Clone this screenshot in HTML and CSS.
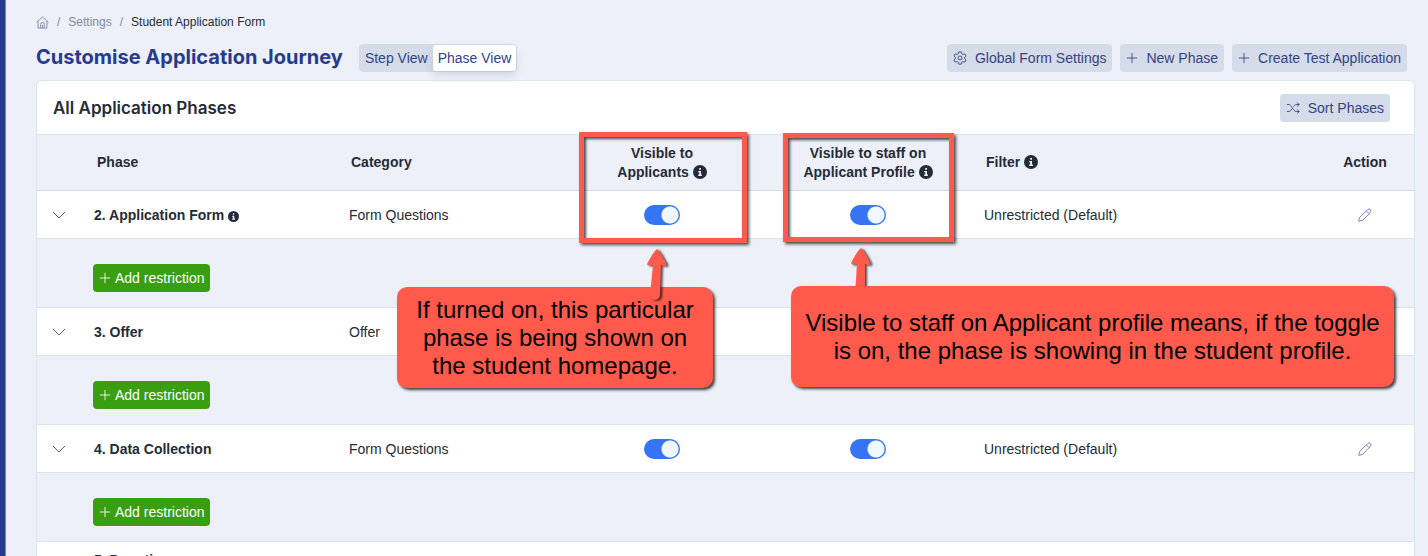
FILE: index.html
```html
<!DOCTYPE html>
<html lang="en">
<head>
<meta charset="UTF-8">
<meta name="viewport" content="width=device-width, initial-scale=1.0">
<title>Customise Application Journey</title>
<link rel="stylesheet" href="styles.css">
</head>
<body>
    <!-- Shared icons -->
    <svg class="sprite" aria-hidden="true">
        <symbol id="plus" viewBox="0 0 14 14"><path d="M7 1v12M1 7h12"/></symbol>
        <symbol id="chevron" viewBox="0 0 14 14"><path d="M1 4l6 6 6-6"/></symbol>
        <symbol id="pencil" viewBox="0 0 14 14"><path d="M.7 13.300l.9-3.800L9.500 1.600a2 2 0 0 1 2.900 2.900L4.500 12.400zM8.300 2.800l2.900 2.900"/></symbol>
        <symbol id="info" viewBox="0 0 14 14">
            <circle cx="7" cy="7" r="7" fill="#252b38" stroke="none"/>
            <path d="M6.200 3h1.800v1.800H6.200zM5.200 6h2.800v3.600h.9V11H5.200V9.600h1V7.200h-1z" fill="#edf0f8" stroke="none"/>
        </symbol>
    </svg>

    <div class="page">
        <div class="sidebar"></div>
        <main class="main">
            <nav class="breadcrumb" aria-label="Breadcrumb">
                <a href="#" aria-label="Home">
                    <svg class="icon-home" viewBox="0 0 14 14"><path d="M.7 6.800L7 1l6.300 5.800M2.200 5.600V13h9.600V5.600M5 13V9a2 2 0 0 1 4 0v4M7 9.500V13"/></svg>
                </a>
                <span class="slash">/</span>
                <a href="#">Settings</a>
                <span class="slash">/</span>
                <span class="current">Student Application Form</span>
            </nav>

            <div class="toolbar">
                <h1>Customise Application Journey</h1>
                <div class="view-switch">
                    <button type="button">Step View</button>
                    <button type="button" class="active">Phase View</button>
                </div>
                <div class="actions">
                    <button type="button" class="btn">
                        <svg class="icon-btn" viewBox="0 0 16 16"><path d="M6.600 1h2.800l.5 2.100 1.500.9 2.100-.7 1.400 2.400L13.300 7.200v1.600l1.600 1.500-1.400 2.400-2.100-.7-1.500.9L9.400 15H6.600l-.5-2.100-1.500-.9-2.100.7-1.400-2.400 1.600-1.500V7.200L1.100 5.700l1.400-2.400 2.100.7 1.500-.9z"/><circle cx="8" cy="8" r="2.300"/></svg>
                        Global Form Settings
                    </button>
                    <button type="button" class="btn"><svg class="icon-plus"><use href="#plus"/></svg>New Phase</button>
                    <button type="button" class="btn"><svg class="icon-plus"><use href="#plus"/></svg>Create Test Application</button>
                </div>
            </div>

            <section class="card">
                <div class="card-header">
                    <h2>All Application Phases</h2>
                    <button type="button" class="btn">
                        <svg class="icon-btn" viewBox="0 0 16 16"><path d="M1 4h2.500c2.500 0 5 8 8 8H15M1 12h2.500c1.200 0 2.200-1.300 3.200-3M8.500 6.500C9.500 5 10.500 4 11.500 4H15M12.800 1.800L15 4l-2.200 2.200M12.800 9.800L15 12l-2.200 2.200"/></svg>
                        Sort Phases
                    </button>
                </div>

                <table class="phases">
                    <colgroup>
                        <col class="col-toggle">
                        <col class="col-phase">
                        <col class="col-category">
                        <col class="col-visible">
                        <col class="col-visible">
                        <col>
                        <col class="col-action">
                    </colgroup>
                    <thead>
                        <tr>
                            <th></th>
                            <th class="th-phase">Phase</th>
                            <th>Category</th>
                            <th class="center">
                                Visible to<br>Applicants <svg class="icon-info"><use href="#info"/></svg>
                                <div class="highlight highlight-applicants"></div>
                                <div class="note note-applicants">If turned on, this particular phase is being shown on the student homepage.</div>
                                <svg class="arrow arrow-applicants" viewBox="0 0 24 52"><path d="M12 1Q14 2 21 15Q23 20 16 17L15 47A4 4 0 0 1 5 47L8 17Q0 19 3 14Q9 3 12 1z"/></svg>
                            </th>
                            <th class="center">
                                Visible to staff on<br>Applicant Profile <svg class="icon-info"><use href="#info"/></svg>
                                <div class="highlight highlight-staff"></div>
                                <svg class="arrow arrow-staff" viewBox="0 0 24 52"><path d="M12 1Q14 2 21 15Q23 20 16 17L16 47H6L8 17Q0 19 3 14Q9 3 12 1z"/></svg>
                                <div class="note note-staff">Visible to staff on Applicant profile means, if the toggle is on, the phase is showing in the student profile.</div>
                            </th>
                            <th>Filter <svg class="icon-info"><use href="#info"/></svg></th>
                            <th class="center">Action</th>
                        </tr>
                    </thead>
                    <tbody>
                        <tr class="phase">
                            <td class="center"><button type="button" class="icon-only" aria-label="Collapse"><svg class="icon-chevron"><use href="#chevron"/></svg></button></td>
                            <td class="name">2. Application Form <svg class="icon-info small"><use href="#info"/></svg></td>
                            <td>Form Questions</td>
                            <td class="center"><input type="checkbox" class="switch" aria-label="Visible to applicants" checked></td>
                            <td class="center"><input type="checkbox" class="switch" aria-label="Visible to staff" checked></td>
                            <td>Unrestricted (Default)</td>
                            <td class="center"><button type="button" class="icon-only" aria-label="Edit"><svg class="icon-pencil"><use href="#pencil"/></svg></button></td>
                        </tr>
                        <tr class="restriction">
                            <td></td>
                            <td colspan="6"><button type="button" class="btn-add"><svg class="icon-plus"><use href="#plus"/></svg>Add restriction</button></td>
                        </tr>
                        <tr class="phase">
                            <td class="center"><button type="button" class="icon-only" aria-label="Collapse"><svg class="icon-chevron"><use href="#chevron"/></svg></button></td>
                            <td class="name">3. Offer</td>
                            <td>Offer</td>
                            <td></td>
                            <td></td>
                            <td></td>
                            <td></td>
                        </tr>
                        <tr class="restriction">
                            <td></td>
                            <td colspan="6"><button type="button" class="btn-add"><svg class="icon-plus"><use href="#plus"/></svg>Add restriction</button></td>
                        </tr>
                        <tr class="phase">
                            <td class="center"><button type="button" class="icon-only" aria-label="Collapse"><svg class="icon-chevron"><use href="#chevron"/></svg></button></td>
                            <td class="name">4. Data Collection</td>
                            <td>Form Questions</td>
                            <td class="center"><input type="checkbox" class="switch" aria-label="Visible to applicants" checked></td>
                            <td class="center"><input type="checkbox" class="switch" aria-label="Visible to staff" checked></td>
                            <td>Unrestricted (Default)</td>
                            <td class="center"><button type="button" class="icon-only" aria-label="Edit"><svg class="icon-pencil"><use href="#pencil"/></svg></button></td>
                        </tr>
                        <tr class="restriction">
                            <td></td>
                            <td colspan="6"><button type="button" class="btn-add"><svg class="icon-plus"><use href="#plus"/></svg>Add restriction</button></td>
                        </tr>
                        <tr class="phase last">
                            <td></td>
                            <td class="name">5. Donation</td>
                            <td></td>
                            <td></td>
                            <td></td>
                            <td></td>
                            <td></td>
                        </tr>
                    </tbody>
                </table>
            </section>
        </main>
    </div>
</body>
</html>
```
FILE: styles.css
```css
* {
    box-sizing: border-box;
}

body {
    margin: 0;
    font-family: "Liberation Sans", Arial, sans-serif;
    font-size: 14px;
    color: #252b38;
    background-color: #edf0f8;
}

button {
    font: inherit;
    cursor: pointer;
}

svg {
    fill: none;
    stroke: currentColor;
    flex: none;
}

.sprite {
    display: none;
}

.page {
    display: flex;
    height: 100vh;
    overflow: hidden;
}

.sidebar {
    width: 6px;
    flex: none;
    background-color: #263a90;
    border-right: 1px solid #7682bb;
}

.main {
    flex: 1;
    padding: 14px 13px 0 30px;
}

/* Breadcrumb */
.breadcrumb {
    display: flex;
    align-items: center;
    gap: 8px;
    height: 16px;
    font-size: 12px;
}

.breadcrumb a {
    display: flex;
    color: #8189a3;
    text-decoration: none;
}

.slash {
    color: #8189a3;
}

.icon-home {
    width: 13px;
    height: 13px;
}

/* Toolbar */
.toolbar {
    display: flex;
    align-items: center;
    gap: 16px;
    height: 50px;
    padding: 6px 8px 0 0;
}

h1 {
    margin: 0;
    padding-bottom: 3px;
    font-family: Inter, sans-serif;
    font-size: 20px;
    font-weight: 700;
    color: #263a90;
}

h2 {
    margin: 0;
    font-family: Inter, sans-serif;
    font-size: 17px;
    font-weight: 600;
}

.view-switch {
    display: flex;
    height: 28px;
    border: 1px solid #d5dbe8;
    border-radius: 4px;
    background-color: #d5dbe8;
}

.view-switch button {
    padding: 0 5px;
    border: none;
    border-radius: 3px;
    background: none;
    color: #344485;
}

.view-switch .active {
    background-color: #fff;
    box-shadow: 0 4px 8px rgba(40, 60, 120, 0.15);
}

.actions {
    display: flex;
    gap: 8px;
    margin-left: auto;
}

.btn {
    display: flex;
    align-items: center;
    gap: 8px;
    height: 28px;
    padding: 0 6px;
    border: none;
    border-radius: 4px;
    background-color: #d5dbe8;
    color: #344485;
    white-space: nowrap;
}

.icon-btn {
    width: 14px;
    height: 14px;
}

.icon-plus {
    width: 12px;
    height: 12px;
}

/* Card */
.card {
    border: 1px solid #dde5ec;
    border-radius: 6px;
    background-color: #fff;
}

.card-header {
    display: flex;
    align-items: center;
    justify-content: space-between;
    height: 53px;
    padding: 0 24px 0 16px;
}

.phases {
    width: 100%;
    table-layout: fixed;
    border-collapse: separate;
    border-spacing: 0;
}

.col-toggle {
    width: 44px;
}

.col-phase {
    width: 255px;
}

.col-category {
    width: 223px;
}

.col-visible {
    width: 206px;
}

.col-action {
    width: 98px;
}

th {
    position: relative;
    height: 57px;
    padding: 0 15px;
    border-top: 1px solid #dde3ea;
    border-bottom: 1px solid #d6dbe3;
    background-color: #edf0f8;
    font-weight: 700;
    line-height: 19px;
    text-align: left;
}

.th-phase {
    padding-left: 16px;
}

td {
    padding: 0 13px;
    border-bottom: 1px solid #dde3ea;
}

.center {
    padding: 0;
    text-align: center;
}

.phase td {
    height: 48px;
}

.restriction td {
    height: 69px;
    padding: 9px 12px 0;
    background-color: #edf0f8;
}

.last td {
    padding-top: 10px;
    vertical-align: top;
}

.name {
    font-weight: 700;
}

.icon-info {
    width: 14px;
    height: 14px;
    vertical-align: -2px;
}

.icon-info.small {
    width: 11px;
    height: 11px;
}

.icon-only {
    padding: 3px 0 0;
    border: none;
    background: none;
    color: #596070;
}

.icon-only svg {
    display: block;
    width: 14px;
    height: 14px;
}

.icon-only .icon-pencil {
    color: #7c87bd;
}

.switch {
    appearance: none;
    display: block;
    width: 36px;
    height: 20px;
    margin: 0 auto;
    border-radius: 10px;
    background: radial-gradient(circle at 26px 10px, #f0f8ff 8px, #3574f2 9px);
    cursor: pointer;
}

.btn-add {
    display: flex;
    align-items: center;
    gap: 4px;
    height: 28px;
    padding: 0 6px;
    border: none;
    border-radius: 4px;
    background-color: #3a9f10;
    color: #fff;
}

/* Annotations laid over the table */
.highlight,
.note,
.arrow {
    position: absolute;
}

.highlight {
    border: 5px solid #ff5a4c;
    box-shadow: 2px 2px 3px rgba(0, 0, 0, 0.7), inset 2px 2px 3px rgba(0, 0, 0, 0.7);
}

.highlight-applicants {
    top: -3px;
    left: 20px;
    width: 168px;
    height: 111px;
}

.highlight-staff {
    top: -2px;
    left: 18px;
    width: 171px;
    height: 109px;
}

.note {
    display: flex;
    align-items: center;
    justify-content: center;
    height: 101px;
    padding: 0 10px;
    border-radius: 10px;
    background-color: #ff5a4c;
    box-shadow: 2px 2px 3px rgba(0, 0, 0, 0.75);
    color: #000;
    font-size: 24px;
    font-weight: 400;
    line-height: 28px;
    text-align: center;
}

.note-applicants {
    top: 152px;
    left: -162px;
    width: 316px;
}

.note-staff {
    top: 151px;
    left: 26px;
    width: 603px;
}

.arrow {
    width: 24px;
    height: 52px;
    fill: #ff5a4c;
    stroke: none;
    filter: drop-shadow(2px 1px 1px rgba(0, 0, 0, 0.7));
}

.arrow-applicants {
    top: 113px;
    left: 86px;
}

.arrow-staff {
    top: 112px;
    left: 84px;
}
```
